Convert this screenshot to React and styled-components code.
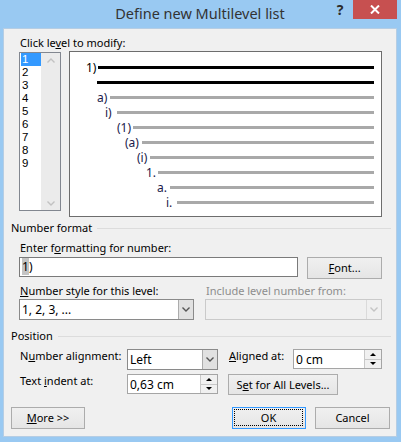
import React from "react"
import styled, { createGlobalStyle } from "styled-components"

const GlobalStyle = createGlobalStyle`
    html, body {
        margin: 0;
        padding: 0;
    }
    body {
        background: #99c9f2;
        font-family: "Noto Sans", "Open Sans", sans-serif;
        font-size: 11px;
        color: #000;
    }
`

const Window = styled.div`
    width: 401px;
    height: 442px;
    box-sizing: border-box;
    padding: 0 4px 5px 3px;
    background: #99c9f2;
    display: flex;
    flex-direction: column;
`

const TitleBar = styled.div`
    height: 28px;
    flex: none;
    display: grid;
    grid-template-columns: 1fr auto 1fr;
    align-items: start;
`

const Title = styled.div`
    grid-column: 2;
    font-size: 14.5px;
    line-height: 26px;
    color: #333;
    white-space: nowrap;
`

const Controls = styled.div`
    justify-self: end;
    display: flex;
    align-items: flex-start;
`

const HelpButton = styled.div`
    width: 26px;
    height: 19px;
    font-size: 14px;
    font-weight: bold;
    line-height: 19px;
    text-align: center;
    color: #2b2b2b;
`

const CloseButton = styled.div`
    width: 44px;
    height: 19px;
    background: #c75050;
    display: flex;
    align-items: center;
    justify-content: center;
`

const Client = styled.div`
    flex: 1;
    background: #f0f0f0;
    border: 1px solid #b5cde4;
    padding: 7px 6px 7px 7px;
    display: flex;
    flex-direction: column;
`

const Indented = styled.div`
    padding: 0 8px;
    display: flex;
    flex-direction: column;
`

const Label = styled.div`
    line-height: 14px;
    white-space: nowrap;
    color: ${({ $disabled }) => ($disabled ? "#8d8d8d" : "#000")};
    margin-top: ${({ $top }) => $top || 0}px;
    align-self: ${({ $start }) => ($start ? "start" : "auto")};
    padding-left: ${({ $indent }) => $indent || 1}px;
`

const TopRow = styled.div`
    display: flex;
    align-items: flex-start;
    margin-top: 1px;
    height: 166px;
`

const ListBox = styled.div`
    width: 42px;
    height: 159px;
    margin-top: 1px;
    box-sizing: border-box;
    border: 1px solid #828790;
    background: #fff;
    display: flex;
    padding-left: 1px;
`

const Items = styled.div`
    width: 20px;
    display: flex;
    flex-direction: column;
`

const Item = styled.div`
    height: 13px;
    line-height: 13px;
    font-family: "Liberation Sans", Arial, sans-serif;
    font-size: 11.5px;
    padding-left: 1px;
    background: ${({ $selected }) => ($selected ? "#3399ff" : "transparent")};
    color: ${({ $selected }) => ($selected ? "#fff" : "#000")};
`

const ScrollTrack = styled.div`
    flex: 1;
    background: #ebebeb;
    display: flex;
    flex-direction: column;
    justify-content: space-between;
    align-items: center;
    padding: 5px 0 4px;
`

const Preview = styled.div`
    flex: 1;
    margin-left: 8px;
    height: 166px;
    box-sizing: border-box;
    border: 1px solid #6d6d6d;
    background: #fff;
    padding-top: 8px;
    display: flex;
    flex-direction: column;
`

const PreviewRow = styled.div`
    height: 15px;
    display: flex;
    align-items: center;
    padding-right: 7px;
`

const Lead = styled.span`
    flex: none;
    width: ${({ $line }) => $line}px;
    padding-left: ${({ $label }) => $label}px;
    box-sizing: border-box;
    font-size: 12px;
    line-height: 15px;
    white-space: nowrap;
    color: ${({ $first }) => ($first ? "#000" : "#1a1a4a")};
`

const Bar = styled.span`
    flex: 1;
    height: 3px;
    background: ${({ $dark }) => ($dark ? "#000" : "#a9a9a9")};
`

const GroupHeader = styled.div`
    display: flex;
    align-items: center;
    line-height: 14px;
    margin-top: ${({ $top }) => $top}px;
    margin-right: -1px;
`

const GroupRule = styled.span`
    flex: 1;
    height: 1px;
    background: #dcdcdc;
    margin-left: 5px;
`

const InputRow = styled.div`
    display: flex;
    align-items: flex-start;
    gap: 9px;
    margin-top: 2px;
`

const TextField = styled.div`
    width: 280px;
    height: 20px;
    box-sizing: border-box;
    border: 1px solid #7a7a7a;
    background: #fff;
    padding-left: 2px;
    font-size: 12px;
    line-height: 18px;
`

const Selection = styled.span`
    background: #c4c4c4;
`

const Button = styled.div`
    width: ${({ $w }) => $w}px;
    height: ${({ $h }) => $h || 22}px;
    box-sizing: border-box;
    border: 1px solid ${({ $default }) => ($default ? "#3399ff" : "#acacac")};
    background: linear-gradient(#f0f0f0, #e5e5e5);
    display: flex;
    align-items: center;
    justify-content: center;
    line-height: 14px;
    white-space: nowrap;
    padding: ${({ $default }) => ($default ? "1px 2px 2px 1px" : "0")};
    margin-left: ${({ $left }) => $left || 0}px;
`

const FocusRing = styled.span`
    align-self: stretch;
    flex: 1;
    border: 1px dotted #000;
    display: flex;
    align-items: center;
    justify-content: center;
`

const StyleGrid = styled.div`
    display: grid;
    grid-template-columns: 175px 177px;
    column-gap: 11px;
    row-gap: 1px;
    margin-top: 5px;
`

const Combo = styled.div`
    height: 21px;
    box-sizing: border-box;
    border: 1px solid ${({ $disabled }) => ($disabled ? "#cacaca" : "#8a8a8a")};
    background: ${({ $disabled }) => ($disabled ? "#f0f0f0" : "#fff")};
    display: flex;
    font-size: 12px;
`

const ComboText = styled.span`
    flex: 1;
    padding-left: 2px;
    line-height: 19px;
`

const ComboArrow = styled.span`
    width: 15px;
    flex: none;
    box-sizing: border-box;
    border-left: 1px solid ${({ $disabled }) => ($disabled ? "#dadada" : "#acacac")};
    background: ${({ $disabled }) => ($disabled ? "#f0f0f0" : "#e1e1e1")};
    display: flex;
    align-items: center;
    justify-content: center;
`

const PositionGrid = styled.div`
    display: grid;
    grid-template-columns: 108px 91px 75px 89px;
    grid-auto-rows: 21px;
    row-gap: 4px;
    margin-top: 6px;
`

const Spin = styled.div`
    height: 20px;
    box-sizing: border-box;
    border: 1px solid #a5a5a5;
    background: #fff;
    display: flex;
    font-size: 12px;
`

const SpinButtons = styled.span`
    width: 16px;
    flex: none;
    display: flex;
    flex-direction: column;
    border-left: 1px solid #c8c8c8;
`

const SpinHalf = styled.span`
    flex: 1;
    display: flex;
    align-items: center;
    justify-content: center;
    background: #f0f0f0;
    border-bottom: ${({ $top }) => ($top ? "1px solid #c8c8c8" : "none")};
`

const Triangle = styled.span`
    width: 0;
    height: 0;
    border-left: 3px solid transparent;
    border-right: 3px solid transparent;
    ${({ $up }) => ($up ? "border-bottom: 3px solid #000;" : "border-top: 3px solid #000;")}
`

const ButtonCell = styled.div`
    grid-column: 3 / 5;
    display: flex;
`

const BottomRow = styled.div`
    display: flex;
    align-items: center;
    margin-top: auto;
`

const Spacer = styled.span`
    flex: 1;
`

function Chevron({ up, color }) {
    return (
        <svg width="8" height="5" viewBox="0 0 8 5">
            <polyline
                points={up ? "0.5,4.5 4,1 7.5,4.5" : "0.5,0.5 4,4 7.5,0.5"}
                fill="none"
                stroke={color}
                strokeWidth="1.4"
            />
        </svg>
    )
}

const levels = [1, 2, 3, 4, 5, 6, 7, 8, 9]

// label/line are x offsets inside the preview box
const previewRows = [
    { text: "1)", label: 16, line: 28, dark: true, first: true },
    { text: "", label: 0, line: 27, dark: true },
    { text: "a)", label: 27, line: 40 },
    { text: "i)", label: 35, line: 47 },
    { text: "(1)", label: 47, line: 63 },
    { text: "(a)", label: 55, line: 72 },
    { text: "(i)", label: 67, line: 80 },
    { text: "1.", label: 76, line: 88 },
    { text: "a.", label: 87, line: 100 },
    { text: "i.", label: 96, line: 107 },
]

export default function App() {
    return (
        <>
            <GlobalStyle />
            <Window>
                <TitleBar>
                    <Title>Define new Multilevel list</Title>
                    <Controls>
                        <HelpButton>?</HelpButton>
                        <CloseButton>
                            <svg width="10" height="9" viewBox="0 0 10 9">
                                <path d="M1 0.5 L9 8.5 M9 0.5 L1 8.5" stroke="#fff" strokeWidth="2" />
                            </svg>
                        </CloseButton>
                    </Controls>
                </TitleBar>

                <Client>
                    <Indented>
                        <Label>Click le<u>v</u>el to modify:</Label>
                        <TopRow>
                            <ListBox>
                                <Items>
                                    {levels.map((n) => (
                                        <Item key={n} $selected={n === 1}>{n}</Item>
                                    ))}
                                </Items>
                                <ScrollTrack>
                                    <Chevron up color="#c2c2c2" />
                                    <Chevron color="#c2c2c2" />
                                </ScrollTrack>
                            </ListBox>
                            <Preview>
                                {previewRows.map((r, i) => (
                                    <PreviewRow key={i}>
                                        <Lead $label={r.label} $line={r.line} $first={r.first}>{r.text}</Lead>
                                        <Bar $dark={r.dark} />
                                    </PreviewRow>
                                ))}
                            </Preview>
                        </TopRow>
                    </Indented>

                    <GroupHeader $top={4}>
                        Number format
                        <GroupRule />
                    </GroupHeader>

                    <Indented>
                        <Label $top={6}>Enter f<u>o</u>rmatting for number:</Label>
                        <InputRow>
                            <TextField><Selection>1</Selection>)</TextField>
                            <Button $w={75}><span><u>F</u>ont...</span></Button>
                        </InputRow>
                        <StyleGrid>
                            <Label><u>N</u>umber style for this level:</Label>
                            <Label $disabled>Include level number from:</Label>
                            <Combo>
                                <ComboText>1, 2, 3, ...</ComboText>
                                <ComboArrow><Chevron color="#555" /></ComboArrow>
                            </Combo>
                            <Combo $disabled>
                                <ComboText />
                                <ComboArrow $disabled><Chevron color="#c4c4c4" /></ComboArrow>
                            </Combo>
                        </StyleGrid>
                    </Indented>

                    <GroupHeader $top={9}>
                        Position
                        <GroupRule />
                    </GroupHeader>

                    <Indented>
                        <PositionGrid>
                            <Label $start>N<u>u</u>mber alignment:</Label>
                            <Combo>
                                <ComboText>Left</ComboText>
                                <ComboArrow><Chevron color="#555" /></ComboArrow>
                            </Combo>
                            <Label $start $indent={11}><u>A</u>ligned at:</Label>
                            <Spin>
                                <ComboText>0 cm</ComboText>
                                <SpinButtons>
                                    <SpinHalf $top><Triangle $up /></SpinHalf>
                                    <SpinHalf><Triangle /></SpinHalf>
                                </SpinButtons>
                            </Spin>

                            <Label $start>Text <u>i</u>ndent at:</Label>
                            <Spin>
                                <ComboText>0,63 cm</ComboText>
                                <SpinButtons>
                                    <SpinHalf $top><Triangle $up /></SpinHalf>
                                    <SpinHalf><Triangle /></SpinHalf>
                                </SpinButtons>
                            </Spin>
                            <ButtonCell>
                                <Button $w={110} $h={21} $left={10}><span>S<u>e</u>t for All Levels...</span></Button>
                            </ButtonCell>
                        </PositionGrid>
                    </Indented>

                    <BottomRow>
                        <Button $w={74}><span><u>M</u>ore &gt;&gt;</span></Button>
                        <Spacer />
                        <Button $w={74} $default><FocusRing>OK</FocusRing></Button>
                        <Button $w={75} $left={9}>Cancel</Button>
                    </BottomRow>
                </Client>
            </Window>
        </>
    )
}
